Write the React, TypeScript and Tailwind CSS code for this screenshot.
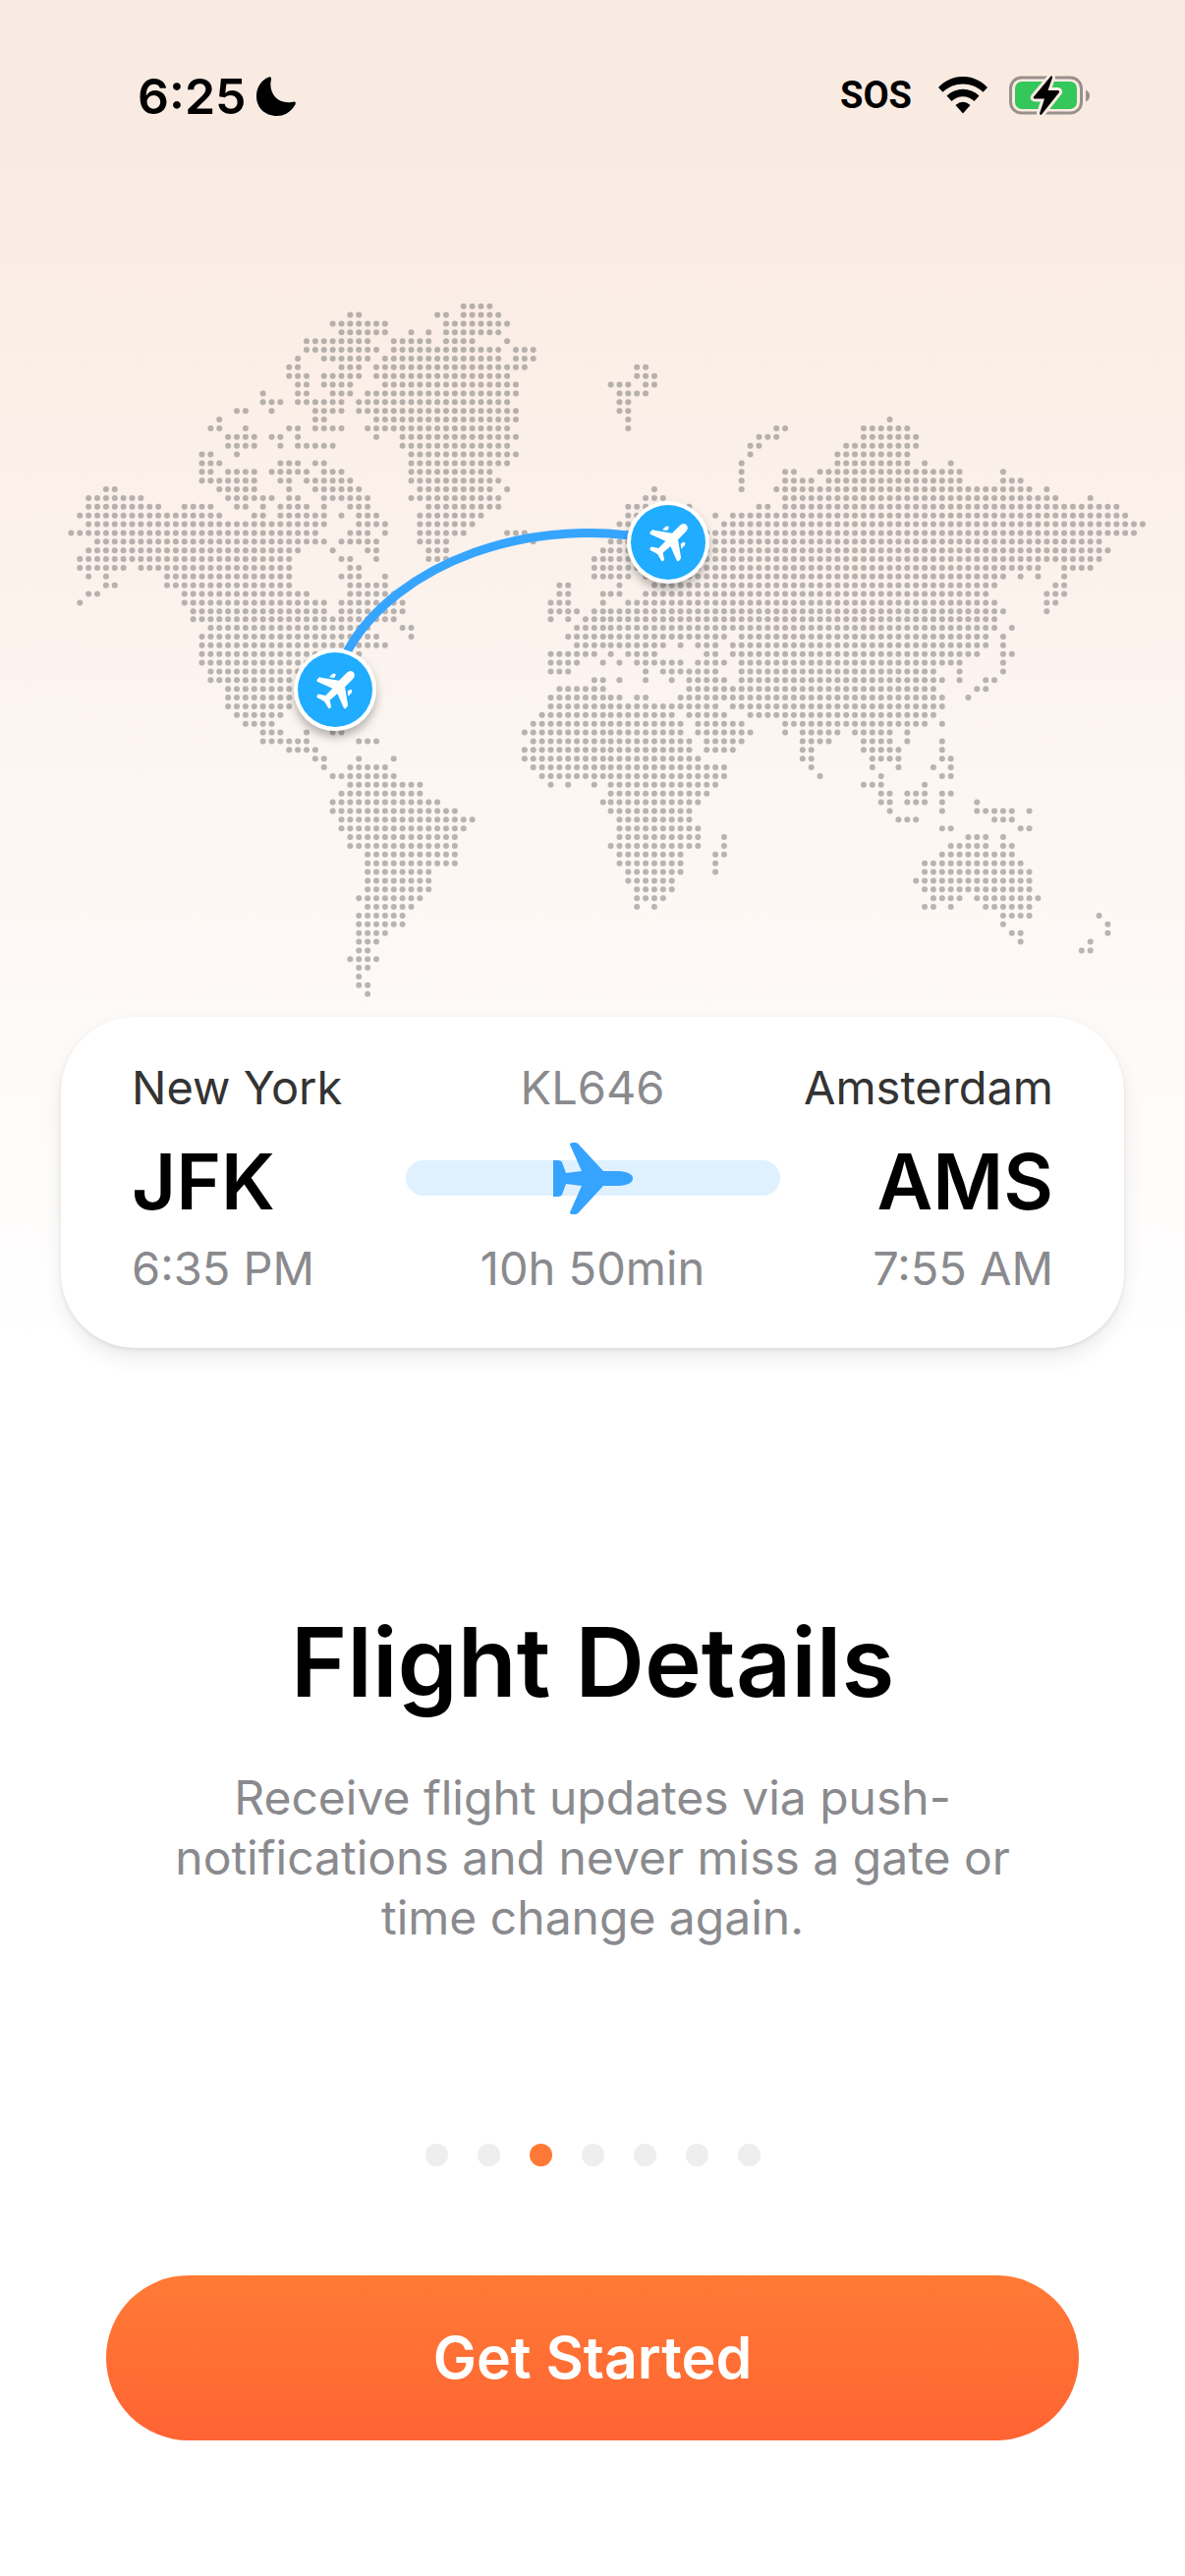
import React from 'react';

// Each row of the map: filled dot columns, "a-b" is an inclusive range
const MAP_ROWS = [
  '45-48',
  '32-33 42-43 45-49',
  '30-36 43-50',
  '31-36 39 41 43-49',
  '27-34 37-41 43-46 50',
  '27-35 37-49 51-53',
  '26 29-34 36-49 51-53',
  '25-26 31-33 35-52 65-66',
  '25-27 29-33 35-50 65-67',
  '26-27 29-32 36-51 62-64 66-67',
  '22 26-27 30-32 34-51 63-66',
  '22-24 26-31 33-50 63-64',
  '19-20 23 28-31 33-51 63-64',
  '17 28-29 35-51 64 94',
  '16-17 20 25-26 28-31 34-50 64 81-82 91-96',
  '18-21 23-24 26 35 38-51 79-81 91-97',
  '18-21 24 26-30 38-50 78-79 89-97',
  '15-16 19 39-51 78 88-96',
  '15-17 24-26 28-29 39-50 77 88-96 98 101',
  '15-16 18-21 23-27 29-31 39-48 77 82-83 86-102 107',
  '15-21 24-25 27-32 39-49 77 82-85 87-102 107-109',
  '4-5 17-21 25 28-33 40-48 50 67 77 81-110 112',
  '2-8 18-23 25-26 29-34 39-49 66-68 82-113 117',
  '2-10 13-16 19-20 22 24-27 29 32-34 41-49 64-69 71 79-80 82-120',
  '1-17 21-22 24-29 31 33-35 40-47 64-70 74 76-121',
  '2-29 33-36 40-46 63-71 75-123',
  '0-28 32-34 36 40-45 50-52 64-71 73-122',
  '3-29 31-35 40-43 53 62-118',
  '2-26 30 34-35 41-43 61-119',
  '1-25 31-32 35 41-43 60-118',
  '1-6 8-25 32-33 42 60-111 114-117',
  '2 4 11-25 31-33 36 60-64 66-107 109 111 114',
  '4-5 11-25 32-36 56-57 63 67-106 113-114',
  '2-3 13-27 32-37 56-57 61-63 66-105 112-114',
  '1 13-29 31-38 55-57 61 64-106 112-113',
  '14-29 31-38 55-58 60-107 112',
  '14-37 55 57 59-106',
  '16-34 38-39 58-106 108',
  '15-35 39 57-75 77-105 107',
  '15-36 58-68 70 72-74 76-105 107',
  '15-33 55-60 62 64-67 73-74 76-104 107-108',
  '15-30 55-58 61 63 65-70 72-75 77-102 107',
  '16-26 55-57 66 68-74 77-99 102 107',
  '16-25 60-61 63 66 69 71-75 77-100 102 105-106',
  '18-25 56-61 71-99 104-105',
  '18-25 55-63 65-66 70-100 103',
  '18-25 55-74 76-100',
  '19-24 54-69 71-75 78-99',
  '20-23 53-70 72-77 82-98 100',
  '22-24 27 30-31 52-70 72-78 82 84-88 90-94 96',
  '22-27 33-35 53-71 73-77 84-87 91-94 96 100',
  '25-28 52-71 73-76 84-85 91-95 100',
  '28-29 33 37 52-72 84-85 92-95 100-101',
  '29 32-36 53-75 85 92 95 99 101',
  '30-37 54-75 86 93 100-101',
  '32-40 55 57 60 62-74 91-93 98',
  '31-40 62-73 93-94 96-98 100-101',
  '30-42 61-72 93-94 96-98 100 104',
  '30-44 62-71 94 100 104-108 110',
  '31-46 63-71 95-97 106-108',
  '31-45 63-72 100-101 109-110',
  '32-44 63-72 75 103-105 107',
  '32-44 62-72 75 101-105 107-108',
  '34-44 63-70 74-75 100-108',
  '34-44 63-70 74 98-109',
  '34-41 64-70 74 98-110',
  '34-41 64-69 97-110',
  '34-41 65-69 98-110',
  '33-40 65-68 99-102 104-111',
  '34-39 65 67 98-99 101 105-110',
  '33-38 107-110 118',
  '33-38 107 119',
  '33-36 108-109 119',
  '33-35 109 117',
  '33-34 116-117',
  '32-35',
  '33-34',
  '33',
  '33-34',
  '34',
];

const PITCH = 8.874;

// Both axes lose one unit around the middle of the grid
const dotX = (col: number) => 72.4 + col * PITCH - (col > 61 ? 1 : 0);
const dotY = (row: number) => 311.7 + row * PITCH - (row > 35 ? 1 : 0);

const dots = MAP_ROWS.flatMap((line, row) =>
  line.split(' ').flatMap((range) => {
    const [from, to = from] = range.split('-').map(Number);
    return Array.from({ length: to - from + 1 }, (_, i) => ({ x: dotX(from + i), y: dotY(row) }));
  }),
);

const MapPin: React.FC<{ x: number; y: number }> = ({ x, y }) => (
  <g transform={`translate(${x} ${y})`}>
    <circle r="42" fill="#fff" filter="url(#pin-shadow)" />
    <circle r="38" fill="#20acff" />
    <g transform="scale(0.3333) translate(-483 -185)" fill="#fff">
      <path d="M519 133Q530 124 539 132Q547 142 537 153L513 177L522 230Q523 237 515 243Q511 244 509 240L490 197L467 217L471 237Q470 243 465 243Q462 242 461 239L451 222Q448 219 430 210Q425 207 428 202Q431 198 436 199L454 203L475 181L430 161Q425 158 428 154L433 148Q437 146 441 148L495 157Z" />
      <path d="M465 147L475 137Q481 133 485 138Q486 145 480 149Z" />
      <path d="M523 205L533 195Q538 189 533 184Q526 184 521 190Z" />
    </g>
  </g>
);

const WorldMap = () => (
  <svg viewBox="0 300 1206 735" className="mt-[180px] block w-full" role="img" aria-label="Route map">
    <defs>
      <filter id="pin-shadow" x="-50%" y="-50%" width="200%" height="200%">
        <feDropShadow dx="0" dy="6" stdDeviation="5" floodColor="#000" floodOpacity="0.28" />
      </filter>
    </defs>
    <g fill="#727272" fillOpacity="0.5">
      {dots.map((dot, index) => (
        <circle key={index} cx={dot.x} cy={dot.y} r="3" />
      ))}
    </g>
    <path d="M337 694L354 662C402 576 540 519 680 552" fill="none" stroke="#36a5ff" strokeWidth="9" />
    <MapPin x={341} y={702} />
    <MapPin x={680} y={552} />
  </svg>
);

const StatusBar = () => (
  <header className="flex h-[120px] items-end justify-between pr-[97px] pb-[2px] pl-[140px]">
    <div className="flex items-center gap-[10px]">
      <span className="text-[50px] leading-[40px] font-semibold">6:25</span>
      <svg viewBox="0 0 40 40" className="h-10 w-10" aria-hidden="true">
        <path
          d="M12.5 .6Q15.5-.6 15 3C12 15 20 28 35.500 26Q41 24 39.500 28.500C34 37 28 40 21 40C8 40 0 31 0 20C0 11 5 3.500 12.500 .6Z"
          fill="#000"
        />
      </svg>
    </div>
    <div className="flex items-center">
      <span className="mr-[27px] font-['Roboto',sans-serif] text-[38px] leading-[40px] font-bold">SOS</span>
      <svg viewBox="0 0 50 38" className="mr-[22px] h-[38px] w-[50px]" aria-hidden="true">
        <path d="M0 11C14-3.700 36-3.700 50 11L45.500 15.700C34 4.700 16 4.700 4.500 15.700Z" />
        <path d="M8.500 19.500C18 10.500 32 10.500 41.500 19.500L36.500 25C30 18.500 20 18.500 13.500 25Z" />
        <path d="M17.500 29Q25 22.500 32.500 29L25 37.500Z" />
      </svg>
      <svg viewBox="0 0 82 42" className="h-[42px] w-[82px]" aria-hidden="true">
        <rect x="1.500" y="3" width="72" height="36" rx="11" fill="none" stroke="#9a908b" strokeWidth="3" />
        <rect x="6" y="7" width="63" height="28" rx="7" fill="#34c759" />
        <path d="M78 15.500Q82 17.500 82 21.500T78 27.500Z" fill="#9a908b" />
        <path
          d="M42.500 1.500L25 22.500Q24 24.500 26.500 24.500H36L31 39.500Q31.500 42 33.500 40L51 18Q51.500 16 49.500 16H39.500L44 3Q44 .5 42.500 1.500Z"
          fill="#000"
          stroke="#faebe3"
          strokeWidth="6"
          paintOrder="stroke"
        />
      </svg>
    </div>
  </header>
);

const FlightCard = () => (
  <section className="mx-[62px] grid grid-cols-[1fr_381px_1fr] items-center rounded-[76px] bg-white px-[72px] pt-[42px] pb-[51px] text-[47px] leading-[60px] text-[#8a8a8e] shadow-[0_10px_20px_rgba(0,0,0,0.08),0_2px_4px_rgba(0,0,0,0.08)]">
    <div className="text-[#333333]">New York</div>
    <div className="text-center">KL646</div>
    <div className="text-right text-[#333333]">Amsterdam</div>

    <div className="mt-4 mb-2 text-[78px] leading-[100px] font-semibold text-black">JFK</div>
    <div className="flex h-9 items-center justify-center rounded-full bg-[#dff1ff]">
      <svg viewBox="0 0 81 73" className="h-[73px] w-[81px] shrink-0" fill="#36a3ff" aria-hidden="true">
        <path d="M17 2Q17 0 20 0H23Q25 0 27 3L51 29H66Q81 30 81 36.500T66 44H51L27 70Q25 73 23 73H20Q17 73 17 71L29 44L13 42L9 53Q8 55 5 55H0V18H5Q8 18 9 20L13 31L29 29Z" />
      </svg>
    </div>
    <div className="mt-4 mb-2 text-right text-[78px] leading-[100px] font-semibold text-black">AMS</div>

    <div>6:35 PM</div>
    <div className="text-center">10h 50min</div>
    <div className="text-right">7:55 AM</div>
  </section>
);

const PAGES = 7;
const ACTIVE_PAGE = 2;

const App = () => (
  <main className="flex min-h-screen flex-col bg-white bg-[linear-gradient(#faebe2_0px,#faebe2_160px,#ffffff_1360px)] font-['Inter',sans-serif] text-black">
    <StatusBar />
    <WorldMap />
    <FlightCard />

    <div className="mt-[260px] px-[150px] text-center">
      <h1 className="text-[98px] leading-[120px] font-semibold">Flight Details</h1>
      <p className="mt-[47px] text-[48px] leading-[61px] text-[#8a8a8e]">
        Receive flight updates via push-
        <br />
        notifications and never miss a gate or
        <br />
        time change again.
      </p>
    </div>

    <div className="mt-[200px] flex justify-center gap-[30px]">
      {Array.from({ length: PAGES }, (_, index) => (
        <span
          key={index}
          className={`h-[23px] w-[23px] rounded-full ${index === ACTIVE_PAGE ? 'bg-[#ff7936]' : 'bg-[#eeeeee]'}`}
        />
      ))}
    </div>

    <button
      type="button"
      className="mx-[108px] mt-[111px] mb-[138px] h-[168px] rounded-full bg-linear-to-b from-[#ff7a35] to-[#ff6333] text-[59px] font-semibold text-white"
    >
      Get Started
    </button>
  </main>
);

export default App;
